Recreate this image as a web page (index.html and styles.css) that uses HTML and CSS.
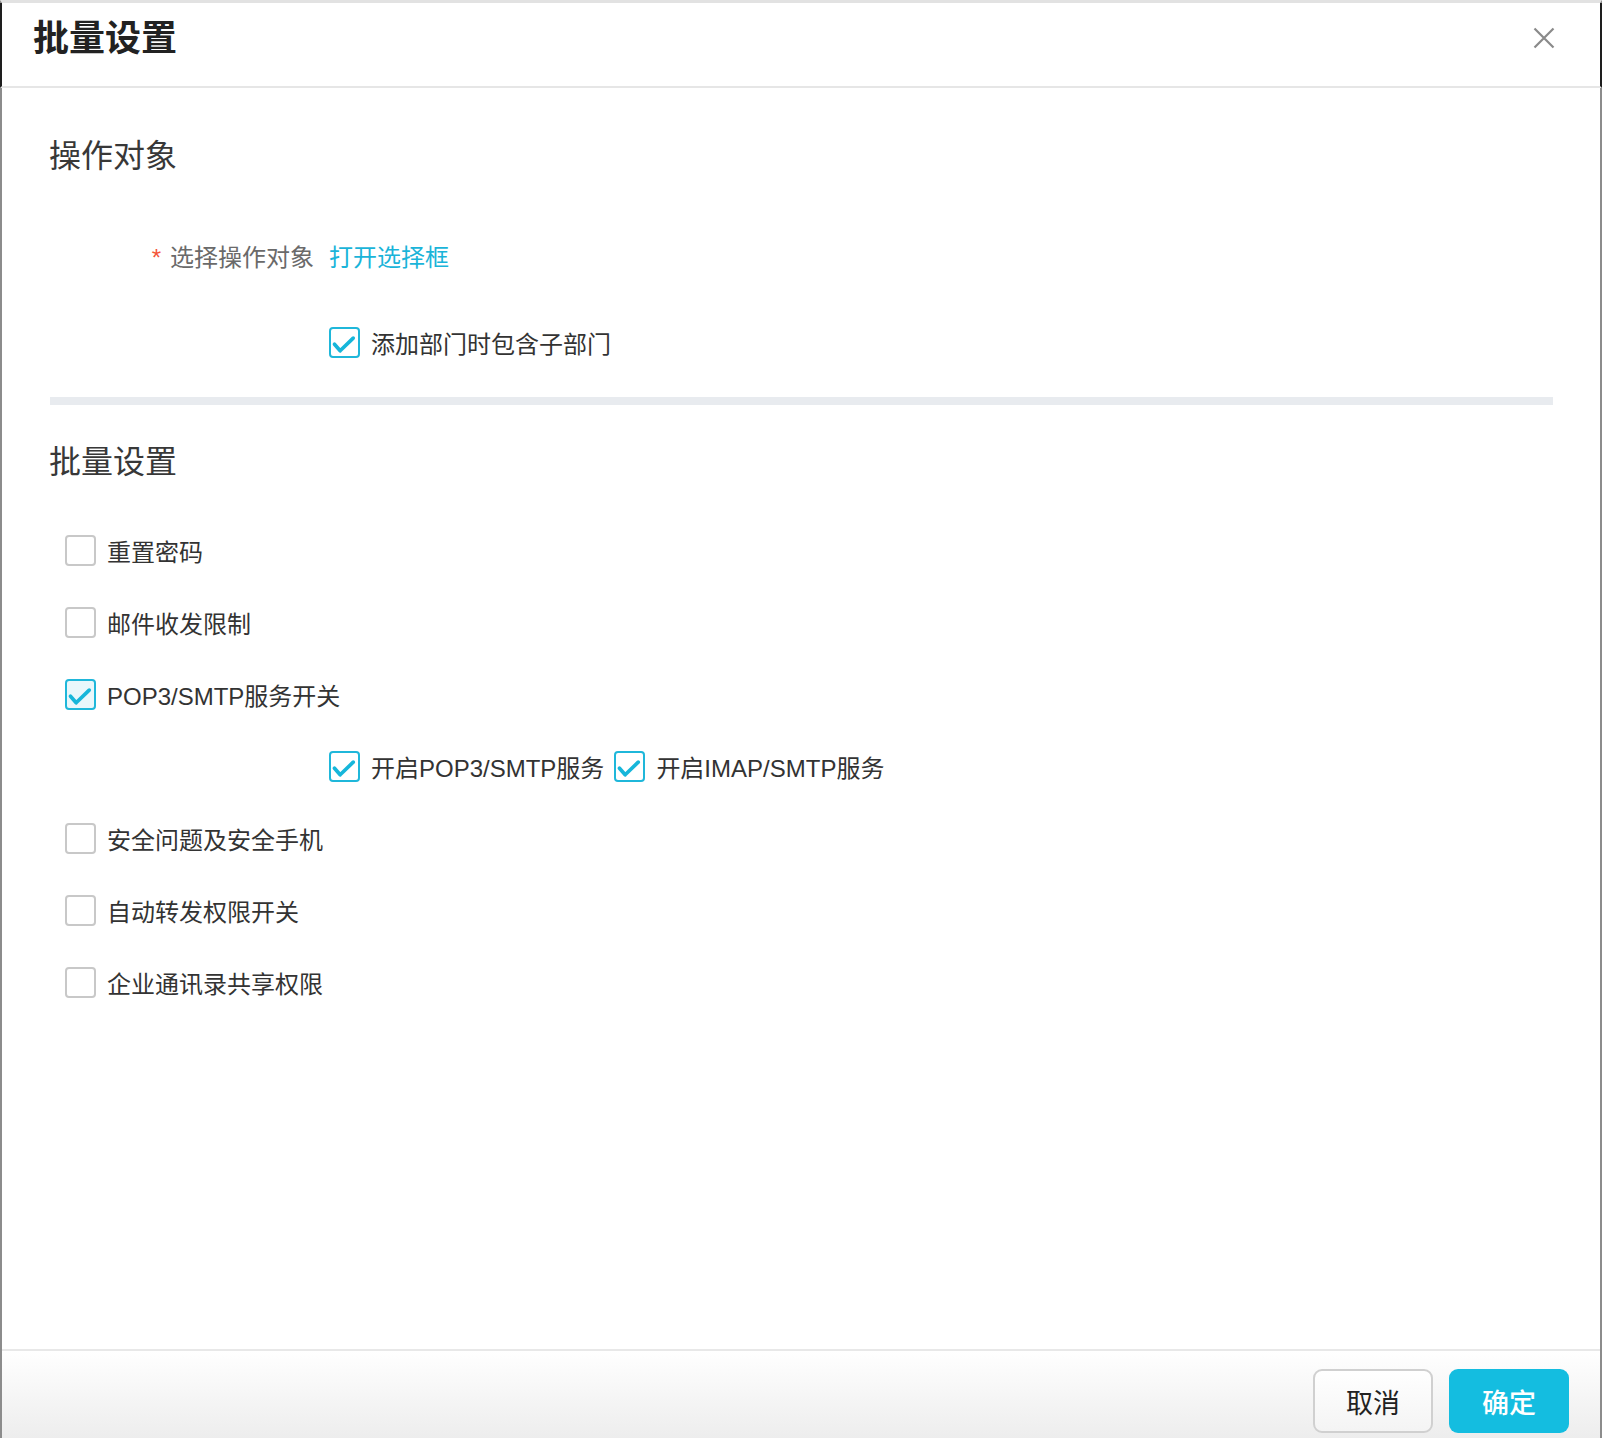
FILE: index.html
```html
<!DOCTYPE html>
<html lang="zh-CN">
<head>
<meta charset="utf-8">
<title>批量设置</title>
<link rel="stylesheet" href="styles.css">
</head>
<body>
<div class="modal">
  <div class="header">
    <h1 class="title">批量设置</h1>
    <span class="close" aria-label="关闭">
      <svg width="22" height="22" viewBox="0 0 22 22"><path d="M1.5 1.5 L20.5 20.5 M20.5 1.5 L1.5 20.5" stroke="#8a8a8a" stroke-width="2.2" fill="none"/></svg>
    </span>
  </div>
  <div class="body">
    <h2 class="section-title">操作对象</h2>
    <div class="form-row">
      <div class="form-label"><span class="req">*</span>选择操作对象</div>
      <a class="link">打开选择框</a>
    </div>
    <div class="sub-row">
      <label class="check"><span class="box checked"><svg viewBox="0 0 31 31"><path d="M4 17.5 L10.5 25 L25.5 10.5" /></svg></span>添加部门时包含子部门</label>
    </div>
    <div class="divider"></div>
    <h2 class="section-title s2">批量设置</h2>
    <div class="list">
      <div class="row"><label class="check"><span class="box"></span>重置密码</label></div>
      <div class="row"><label class="check"><span class="box"></span>邮件收发限制</label></div>
      <div class="row"><label class="check"><span class="box checked tint"><svg viewBox="0 0 31 31"><path d="M4 17.5 L10.5 25 L25.5 10.5" /></svg></span>POP3/SMTP服务开关</label></div>
      <div class="row nested">
        <label class="check"><span class="box checked"><svg viewBox="0 0 31 31"><path d="M4 17.5 L10.5 25 L25.5 10.5" /></svg></span>开启POP3/SMTP服务</label>
        <label class="check"><span class="box checked"><svg viewBox="0 0 31 31"><path d="M4 17.5 L10.5 25 L25.5 10.5" /></svg></span>开启IMAP/SMTP服务</label>
      </div>
      <div class="row"><label class="check"><span class="box"></span>安全问题及安全手机</label></div>
      <div class="row"><label class="check"><span class="box"></span>自动转发权限开关</label></div>
      <div class="row"><label class="check"><span class="box"></span>企业通讯录共享权限</label></div>
    </div>
  </div>
  <div class="footer">
    <button class="btn btn-cancel">取消</button>
    <button class="btn btn-ok">确定</button>
  </div>
</div>
</body>
</html>
```

FILE: styles.css
```css
* { box-sizing: border-box; }
html, body { margin: 0; padding: 0; }
body {
  background: #fff;
  font-family: "Liberation Sans", "Noto Sans CJK SC", sans-serif;
  color: #333;
}
.modal {
  height: 1438px;
  display: flex;
  flex-direction: column;
  border-top: 3px solid #e2e2e2;
  border-left: 2px solid #8c8c8c;
  border-right: 2px solid #8c8c8c;
}
.header {
  height: 85px;
  margin: 0 -2px;
  border-left: 2px solid #1e1e1e;
  border-right: 2px solid #1e1e1e;
  border-bottom: 2px solid #e6e6e6;
  display: flex;
  align-items: flex-start;
  justify-content: space-between;
  padding: 15px 45px 0 31px;
}
.title {
  margin: 0;
  font-size: 36px;
  line-height: 42px;
  font-weight: 700;
  color: #222;
}
.close {
  display: block;
  margin-top: 9px;
  width: 22px;
  height: 22px;
}
.close svg { display: block; }
.body {
  flex: 1;
  padding: 48px 47px 0 45px;
}
.section-title {
  margin: 0;
  font-size: 32px;
  line-height: 40px;
  font-weight: 400;
  color: #383838;
  padding-left: 2px;
}
.form-row {
  display: flex;
  align-items: center;
  height: 36px;
  margin-top: 61px;
  font-size: 24px;
}
.form-label {
  width: 282px;
  text-align: right;
  padding-right: 15px;
  color: #6a6a6a;
}
.req {
  color: #f4553a;
  margin-right: 9px;
}
.link {
  color: #1ab4d9;
  cursor: pointer;
}
.sub-row {
  margin-top: 51px;
  padding-left: 282px;
  height: 36px;
  display: flex;
  align-items: center;
}
.check {
  display: inline-flex;
  align-items: center;
  font-size: 24px;
  color: #333;
  gap: 11px;
  cursor: pointer;
}
.box {
  width: 31px;
  height: 31px;
  border: 2px solid #c8c8c8;
  border-radius: 4px;
  background: #fff;
  flex: none;
  display: block;
}
.box.checked {
  border-color: #1fb7da;
}
.box.tint { background: #e9f7fb; }
.box svg {
  display: block;
  width: 27px;
  height: 27px;
}
.box svg path {
  fill: none;
  stroke: #16b6da;
  stroke-width: 4.2;
  stroke-linecap: round;
  stroke-linejoin: round;
}
.divider {
  height: 8px;
  background: #e8ebef;
  margin: 37px 0 0 3px;
}
.section-title.s2 { margin-top: 37px; }
.list {
  margin-top: 32px;
}
.row {
  height: 72px;
  display: flex;
  align-items: center;
  padding-left: 18px;
}
.row.nested {
  padding-left: 282px;
  gap: 10px;
}
.footer {
  height: 89px;
  border-top: 2px solid #e8e8e8;
  background: linear-gradient(#ffffff, #ededed);
  display: flex;
  justify-content: flex-end;
  align-items: flex-start;
  gap: 16px;
  padding: 18px 31px 0 0;
}
.btn {
  width: 120px;
  height: 64px;
  border-radius: 9px;
  font-family: "Liberation Sans", "Noto Sans CJK SC", sans-serif;
  font-size: 27px;
  font-weight: 400;
  cursor: pointer;
}
.btn-cancel {
  border: 2px solid #d0d0d0;
  background: linear-gradient(#ffffff, #f4f4f4);
  color: #222;
}
.btn-ok {
  border: none;
  background: #14bde0;
  color: #fff;
  font-weight: 500;
}
```
